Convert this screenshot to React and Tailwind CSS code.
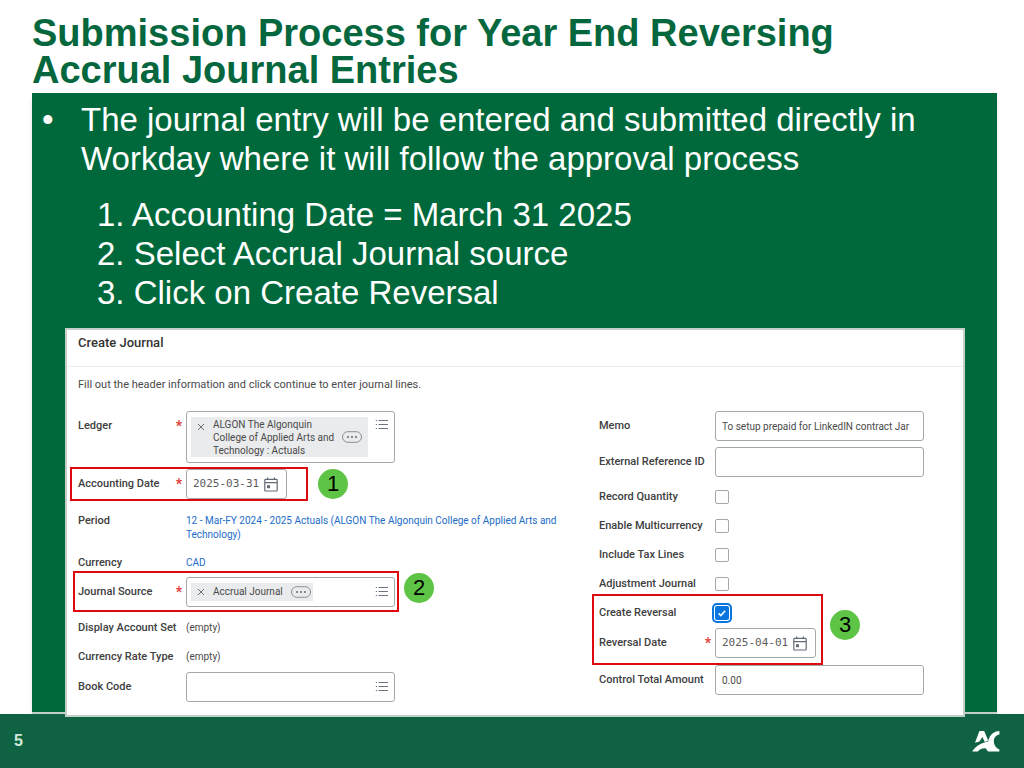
import React from "react";

const steps = [
  "1. Accounting Date = March 31 2025",
  "2. Select Accrual Journal source",
  "3. Click on Create Reversal",
];

const options = [
  { id: "record-quantity", label: "Record Quantity" },
  { id: "enable-multicurrency", label: "Enable Multicurrency" },
  { id: "include-tax-lines", label: "Include Tax Lines" },
  { id: "adjustment-journal", label: "Adjustment Journal" },
];

const boxClass = "rounded-[3px] border border-[#a3a8ab] bg-white";

const ListIcon = () => (
  <svg viewBox="0 0 14 12" className="h-3 w-3.5" stroke="#6b7480" strokeWidth="1.2" fill="none">
    <path d="M3.5 1.5H13M3.5 5.5H13M3.5 9.5H13" />
    <path d="M0.8 1.5H2M0.8 5.5H2M0.8 9.5H2" />
  </svg>
);

const CalendarIcon = () => (
  <svg viewBox="0 0 14 15" className="h-[15px] w-3.5" fill="none" stroke="#626a73" strokeWidth="1.2">
    <rect x="0.8" y="2.4" width="12.4" height="11.6" rx="0.8" />
    <path d="M1 5.6H13M3.6 0.4V3M10.4 0.4V3" />
    <rect x="3" y="8.2" width="3" height="3" fill="#626a73" stroke="none" />
  </svg>
);

const RemoveIcon = () => (
  <svg viewBox="0 0 8 8" className="h-2 w-2" stroke="#6b7075" strokeWidth="1">
    <path d="M1 1L7 7M7 1L1 7" />
  </svg>
);

const MoreIcon = () => (
  <svg viewBox="0 0 20 12" className="h-3 w-5" fill="none" stroke="#8a9096">
    <rect x="0.5" y="0.7" width="19" height="10.6" rx="5.3" />
    <g fill="#626a73" stroke="none">
      <circle cx="6" cy="6" r="1" />
      <circle cx="10" cy="6" r="1" />
      <circle cx="14" cy="6" r="1" />
    </g>
  </svg>
);

const Logo = () => (
  <svg viewBox="0 0 28 22" className="h-[22px] w-7" fill="#fff">
    <path d="M3 12.8 7.4 1H12.2L16.2 10.6 12.8 12 10.4 7 7.4 11.6Z" />
    <path d="M27.4 1C21.6 1.2 17.6 5 16.2 11.4 10.6 12.4 3.4 15.6 0.2 21.4H5.8C8 19 11 18 13.8 18.4L16 21.4H27.4V19.6C24 18 21.8 15 21.8 11.4 21.8 7.8 24 5 27.4 4.6Z" />
  </svg>
);

const Label = ({ htmlFor, required, right, children }) => {
  const Tag = htmlFor ? "label" : "span";
  return (
    <Tag
      htmlFor={htmlFor}
      className={`flex shrink-0 justify-between pr-1 text-[11px] font-medium text-[#404040] ${right ? "w-29" : "w-27"}`}
    >
      {children}
      {required && <span className="text-sm leading-[14px] font-bold text-[#e0403a]">*</span>}
    </Tag>
  );
};

// Red outline drawn over the fields that belong to a step
const Highlight = ({ className }) => (
  <div className={`pointer-events-none absolute border-2 border-[#df0a0f] ${className}`} />
);

const StepBadge = ({ n, className }) => (
  <div
    className={`absolute flex h-[30px] w-[30px] items-center justify-center rounded-full bg-[#5ec445] font-['Liberation_Sans',sans-serif] text-[22px] leading-none text-black ${className}`}
  >
    {n}
  </div>
);

const DateField = ({ id, value }) => (
  <div className={`flex h-[30px] w-[101px] items-center pr-2 pl-1.5 ${boxClass}`}>
    <input
      id={id}
      defaultValue={value}
      className="min-w-0 flex-1 font-['DejaVu_Sans_Mono',monospace] text-[11px] text-[#5c5c5c] outline-none"
    />
    <button type="button" aria-label="Open calendar">
      <CalendarIcon />
    </button>
  </div>
);

const ListButton = () => (
  <button type="button" aria-label="Open list" className="shrink-0">
    <ListIcon />
  </button>
);

const CreateJournal = () => (
  <section className="relative z-10 mr-8 -mb-[5px] ml-[33px] border-2 border-[#c3cfc9] bg-white pb-[13px] font-[Roboto,sans-serif] text-[10px] leading-[14px] text-[#4a4a4a]">
    <h2 className="border-b border-[#ececec] px-[11px] pt-[5px] pb-[15px] text-[13px] leading-4 font-medium text-[#333]">
      Create Journal
    </h2>
    <p className="px-[11px] pt-[11px] text-[11px]">
      Fill out the header information and click continue to enter journal lines.
    </p>

    <div className="grid grid-cols-[521fr_353fr] px-[11px] pt-[19px]">
      <div className="flex flex-col">
        <div className="flex items-start">
          <div className="pt-2">
            <Label htmlFor="ledger" required>Ledger</Label>
          </div>
          <div className={`flex h-[52px] w-[209px] items-start justify-between py-[5px] pr-[5px] pl-1 ${boxClass}`}>
            <div className="flex h-10 w-[177px] items-center gap-2 bg-[#e9ebec] px-1.5">
              <button type="button" aria-label="Remove ledger" className="self-start pt-1.5">
                <RemoveIcon />
              </button>
              <output id="ledger" className="w-[125px] leading-[13px] whitespace-nowrap">
                ALGON The Algonquin<br />College of Applied Arts and<br />Technology : Actuals
              </output>
              <button type="button" aria-label="Ledger actions" className="shrink-0">
                <MoreIcon />
              </button>
            </div>
            <div className="pt-0.5">
              <ListButton />
            </div>
          </div>
        </div>

        <div className="relative mt-1.5 flex items-center">
          <Label htmlFor="accounting-date" required>Accounting Date</Label>
          <DateField id="accounting-date" value="2025-03-31" />
          <Highlight className="-top-0.5 -bottom-0.5 -left-2 w-[238px]" />
          <StepBadge n="1" className="left-60" />
        </div>

        <div className="mt-[15px] flex items-start">
          <Label>Period</Label>
          <a href="#period" className="max-w-[400px] text-[#1c6cc7]">
            12 - Mar-FY 2024 - 2025 Actuals (ALGON The Algonquin College of Applied Arts and
            <br />
            Technology)
          </a>
        </div>

        <div className="mt-3.5 flex items-center">
          <Label>Currency</Label>
          <a href="#currency" className="text-[#1c6cc7]">CAD</a>
        </div>

        <div className="relative mt-[7px] flex items-center">
          <Label htmlFor="journal-source" required>Journal Source</Label>
          <div className={`flex h-[30px] w-[209px] items-center justify-between pr-[5px] pl-1 ${boxClass}`}>
            <div className="flex h-[18px] items-center gap-2 bg-[#e9ebec] pr-0.5 pl-1.5">
              <button type="button" aria-label="Remove source">
                <RemoveIcon />
              </button>
              <output id="journal-source">Accrual Journal</output>
              <button type="button" aria-label="Source actions">
                <MoreIcon />
              </button>
            </div>
            <ListButton />
          </div>
          <Highlight className="-top-1.5 -bottom-[5px] -left-[5px] w-[326px]" />
          <StepBadge n="2" className="-top-1 left-[326px]" />
        </div>

        <div className="mt-3.5 flex items-center">
          <Label>Display Account Set</Label>
          <span>(empty)</span>
        </div>
        <div className="mt-[15px] flex items-center">
          <Label>Currency Rate Type</Label>
          <span>(empty)</span>
        </div>
        <div className="mt-2 flex items-center">
          <Label htmlFor="book-code">Book Code</Label>
          <div className={`flex h-[30px] w-[209px] items-center pr-[5px] pl-1.5 ${boxClass}`}>
            <input id="book-code" className="min-w-0 flex-1 outline-none" />
            <ListButton />
          </div>
        </div>
      </div>

      <div className="flex flex-col">
        <div className="flex items-center">
          <Label right htmlFor="memo">Memo</Label>
          <input
            id="memo"
            defaultValue="To setup prepaid for LinkedIN contract Jar"
            className={`h-[30px] w-[209px] px-1.5 ${boxClass}`}
          />
        </div>
        <div className="mt-1.5 flex items-center">
          <Label right htmlFor="external-reference">External Reference ID</Label>
          <input id="external-reference" className={`h-[30px] w-[209px] px-1.5 ${boxClass}`} />
        </div>

        <div className="mt-[13px] flex flex-col gap-[15px]">
          {options.map((o) => (
            <div key={o.id} className="flex items-center">
              <Label right htmlFor={o.id}>{o.label}</Label>
              <input
                id={o.id}
                type="checkbox"
                className="h-3.5 w-3.5 appearance-none rounded-[2px] border border-[#a3a8ab] bg-white"
              />
            </div>
          ))}
        </div>

        <div className="relative mt-[15px]">
          <div className="flex items-center">
            <Label right htmlFor="create-reversal">Create Reversal</Label>
            <div className="relative h-3.5 w-3.5">
              <input
                id="create-reversal"
                type="checkbox"
                defaultChecked
                className="block h-3.5 w-3.5 appearance-none rounded-[2px] bg-[#0875e1] ring-2 ring-[#0875e1] ring-offset-1"
              />
              <svg viewBox="0 0 14 14" className="pointer-events-none absolute inset-0" fill="none" stroke="#fff" strokeWidth="1.6">
                <path d="M3.6 7.4L5.8 9.5L10.2 4.8" />
              </svg>
            </div>
          </div>
          <div className="mt-2 flex items-center">
            <Label right htmlFor="reversal-date" required>Reversal Date</Label>
            <DateField id="reversal-date" value="2025-04-01" />
          </div>
          <Highlight className="-top-3 -bottom-[7px] -left-[7px] w-[231px]" />
          <StepBadge n="3" className="top-1 left-[231px]" />
        </div>

        <div className="mt-[7px] flex items-center">
          <Label right htmlFor="control-total">Control Total Amount</Label>
          <input
            id="control-total"
            defaultValue="0.00"
            className={`h-[30px] w-[209px] px-1.5 ${boxClass}`}
          />
        </div>
      </div>
    </div>
  </section>
);

const App = () => {
  return (
    <div className="flex min-h-screen flex-col bg-white font-['Liberation_Sans',sans-serif]">
      <h1 className="px-8 pt-[15px] pb-1 text-[38px] leading-[37px] font-bold text-[#04673e]">
        Submission Process for Year End Reversing
        <br />
        Accrual Journal Entries
      </h1>

      <main className="mr-[27px] ml-8 border-b-2 border-[#c3cfc9] bg-[#00693c] pt-[7px] text-[33px] leading-[39px] text-white shadow-md">
        <ul>
          <li className="flex pl-2.5">
            <span className="w-[39px] shrink-0">•</span>
            <p className="max-w-[860px]">
              The journal entry will be entered and submitted directly in Workday where it will follow
              the approval process
            </p>
          </li>
        </ul>
        <ol className="mt-[17px] mb-4 pl-[65px]">
          {steps.map((step) => (
            <li key={step}>{step}</li>
          ))}
        </ol>
        <CreateJournal />
      </main>

      <footer className="flex min-h-[54px] flex-1 items-center justify-between bg-[#0f6342] pr-6 pl-3.5">
        <span className="text-base font-bold text-[#cfeadb]">5</span>
        <Logo />
      </footer>
    </div>
  );
};

export default App;
